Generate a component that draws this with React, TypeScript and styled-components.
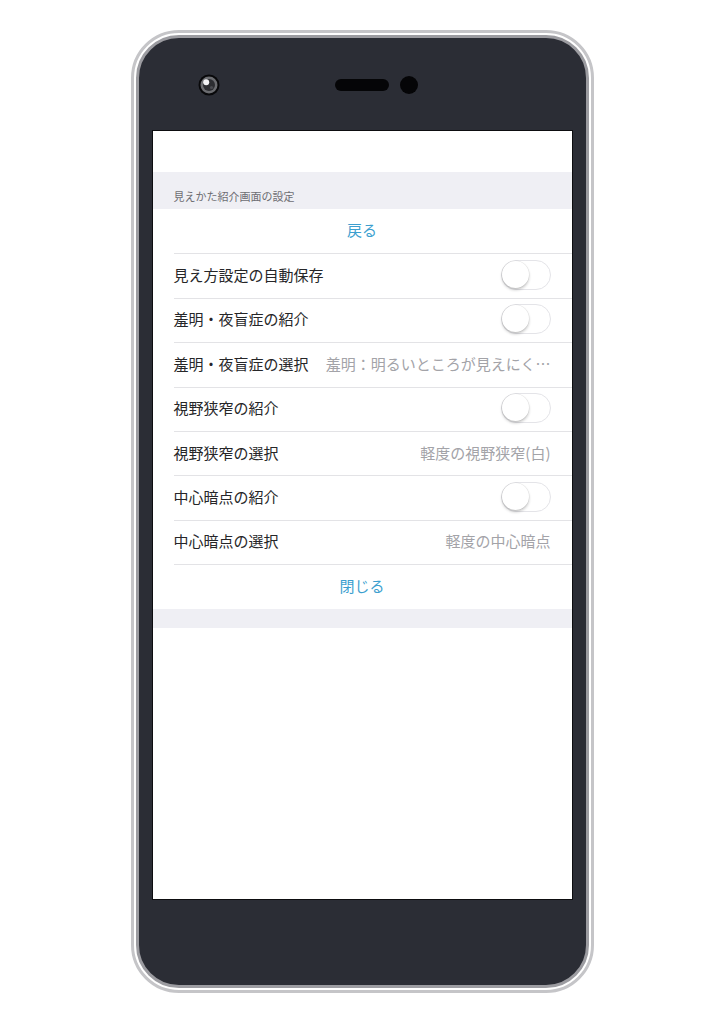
import React from 'react';
import styled, { createGlobalStyle } from 'styled-components';

const GlobalStyle = createGlobalStyle`
  html, body {
    margin: 0;
    padding: 0;
    background: #ffffff;
  }
  body {
    font-family: "Noto Sans CJK JP", "Noto Sans", sans-serif;
  }
`;

const Page = styled.div`
  padding-top: 30px;
  display: flex;
  justify-content: center;
`;

// outer metal rim with a white gap before the inner rim
const PhoneShell = styled.div`
  box-sizing: border-box;
  width: 463px;
  height: 963px;
  padding: 2px;
  border: 3px solid #c5c5c8;
  border-radius: 48px;
  background: #ffffff;
`;

const PhoneBody = styled.div`
  box-sizing: border-box;
  height: 100%;
  border: 3px solid #9c9ca1;
  border-radius: 43px;
  background: #2b2d35;
  display: flex;
  flex-direction: column;
  padding: 0 13px;
`;

const TopBezel = styled.div`
  height: 92px;
  flex-shrink: 0;
  display: flex;
  align-items: center;
  padding-left: 46px;
  padding-top: 1px;
  box-sizing: border-box;
`;

const Speaker = styled.div`
  width: 54px;
  height: 12px;
  border-radius: 6px;
  background: #050507;
  margin-left: 115px;
`;

const Sensor = styled.div`
  width: 18px;
  height: 18px;
  border-radius: 50%;
  background: #050507;
  margin-left: 11px;
`;

const BottomBezel = styled.div`
  flex: 1;
`;

const Screen = styled.div`
  height: 770px;
  flex-shrink: 0;
  box-sizing: border-box;
  border: 1px solid #0d0d10;
  background: #ffffff;
  display: flex;
  flex-direction: column;
  overflow: hidden;
`;

const TopSpace = styled.div`
  height: 41px;
  flex-shrink: 0;
`;

const SectionHeader = styled.div`
  height: 37px;
  flex-shrink: 0;
  background: #efeff4;
  box-sizing: border-box;
  padding: 16px 0 0 21px;
  font-size: 11px;
  line-height: 16px;
  color: #6d6d72;
`;

const List = styled.div`
  display: flex;
  flex-direction: column;
`;

const Row = styled.div<{ $divider?: boolean }>`
  height: 44.4px;
  margin-left: 21px;
  box-sizing: border-box;
  display: flex;
  align-items: center;
  gap: 15px;
  padding: 0 21px 3px 0;
  border-top: ${(p) => (p.$divider ? '1px solid #e3e3e6' : 'none')};
`;

const ActionRow = styled(Row)`
  justify-content: center;
  font-size: 15px;
  color: #3d9fcf;
`;

const Label = styled.span`
  font-size: 15px;
  color: #262628;
  white-space: nowrap;
  flex-shrink: 0;
`;

const Value = styled.span`
  flex: 1;
  min-width: 0;
  font-size: 15px;
  color: #a3a3a8;
  text-align: right;
  white-space: nowrap;
`;

const Switch = styled.div`
  margin-left: auto;
  width: 50px;
  height: 30px;
  box-sizing: border-box;
  border: 1.5px solid #e4e4e8;
  border-radius: 15px;
  background: #ffffff;
  position: relative;
  flex-shrink: 0;
`;

const Knob = styled.div`
  position: absolute;
  left: 0;
  top: 0;
  width: 27px;
  height: 27px;
  border-radius: 50%;
  background: #ffffff;
  box-shadow: 0 2px 3px rgba(0, 0, 0, 0.22), 0 0 0 0.5px rgba(0, 0, 0, 0.08);
`;

const FooterBand = styled.div`
  height: 19px;
  flex-shrink: 0;
  background: #efeff4;
`;

const Camera = () => (
  <svg width="22" height="22" viewBox="0 0 22 22">
    <circle cx="11" cy="11" r="10.5" fill="#08080a" />
    <circle cx="11" cy="11" r="8.5" fill="#6b6c70" />
    <circle cx="11" cy="11" r="6" fill="#2c2d31" />
    <circle cx="8.2" cy="8.2" r="3" fill="#f2f2f4" />
    <circle cx="13.5" cy="13.5" r="1.6" fill="#4a4b50" />
  </svg>
);

type Item =
  | { kind: 'switch'; label: string }
  | { kind: 'select'; label: string; value: string };

const items: Item[] = [
  { kind: 'switch', label: '見え方設定の自動保存' },
  { kind: 'switch', label: '羞明・夜盲症の紹介' },
  { kind: 'select', label: '羞明・夜盲症の選択', value: '羞明：明るいところが見えにく…' },
  { kind: 'switch', label: '視野狭窄の紹介' },
  { kind: 'select', label: '視野狭窄の選択', value: '軽度の視野狭窄(白)' },
  { kind: 'switch', label: '中心暗点の紹介' },
  { kind: 'select', label: '中心暗点の選択', value: '軽度の中心暗点' },
];

export default function App() {
  return (
    <>
      <GlobalStyle />
      <Page>
        <PhoneShell>
          <PhoneBody>
            <TopBezel>
              <Camera />
              <Speaker />
              <Sensor />
            </TopBezel>
            <Screen>
              <TopSpace />
              <SectionHeader>見えかた紹介画面の設定</SectionHeader>
              <List>
                <ActionRow>戻る</ActionRow>
                {items.map((it) => (
                  <Row key={it.label} $divider>
                    <Label>{it.label}</Label>
                    {it.kind === 'switch' ? (
                      <Switch>
                        <Knob />
                      </Switch>
                    ) : (
                      <Value>{it.value}</Value>
                    )}
                  </Row>
                ))}
                <ActionRow $divider>閉じる</ActionRow>
              </List>
              <FooterBand />
            </Screen>
            <BottomBezel />
          </PhoneBody>
        </PhoneShell>
      </Page>
    </>
  );
}
